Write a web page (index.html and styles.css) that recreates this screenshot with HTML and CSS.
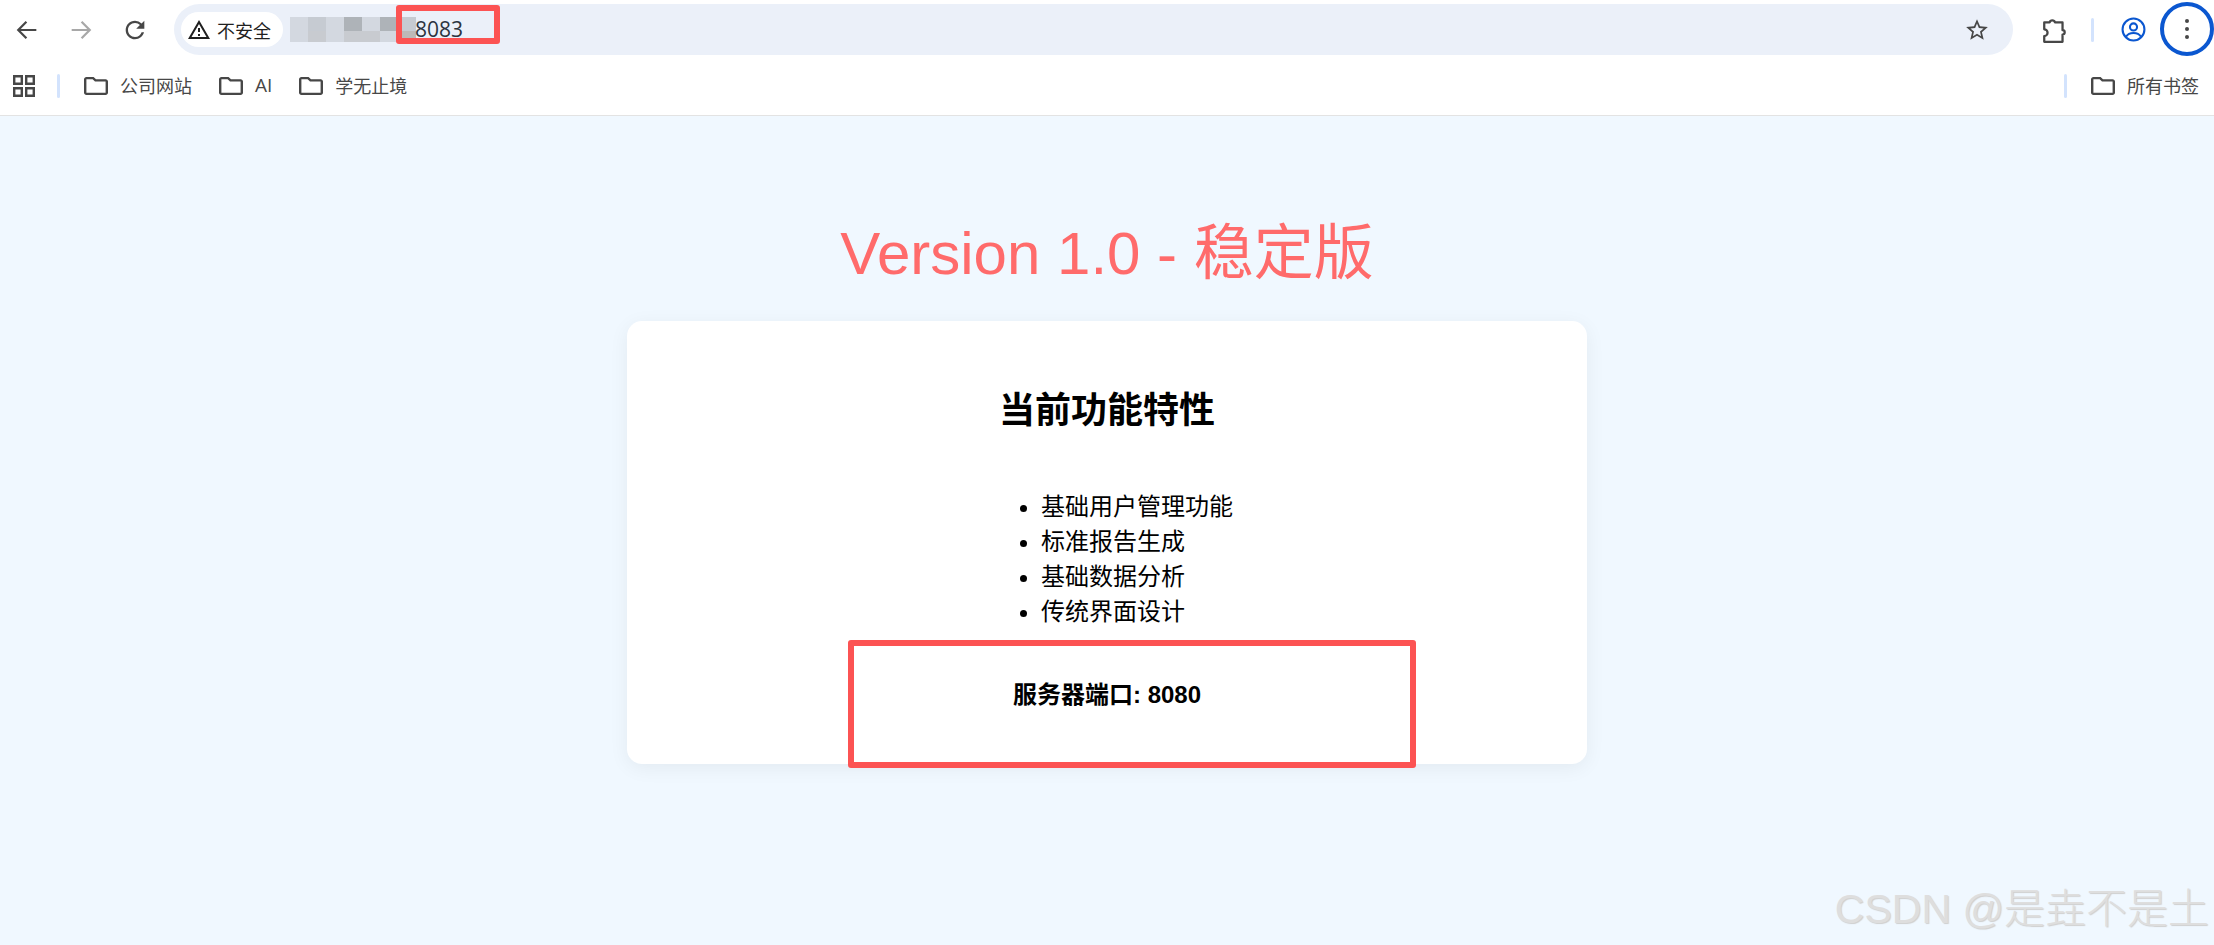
FILE: index.html
```html
<!DOCTYPE html>
<html lang="zh-CN">
<head>
<meta charset="utf-8">
<title>Version 1.0 - 稳定版</title>
<link rel="stylesheet" href="styles.css">
</head>
<body>
<header class="chrome">
  <div class="toolbar">
    <button class="nav"><svg class="ico-nav" viewBox="0 0 24 24"><path class="line dark" d="M20 12H4.5M11.5 5 4.5 12l7 7"/></svg></button>
    <button class="nav"><svg class="ico-nav" viewBox="0 0 24 24"><path class="line faint" d="M4 12h15.5M12.5 5l7 7-7 7"/></svg></button>
    <button class="nav"><svg class="ico-nav" viewBox="0 0 24 24"><path class="fill-dark" d="M17.65 6.35A7.958 7.958 0 0 0 12 4c-4.42 0-7.99 3.58-7.99 8s3.57 8 7.99 8c3.73 0 6.84-2.55 7.73-6h-2.08A5.99 5.99 0 0 1 12 18c-3.31 0-6-2.69-6-6s2.69-6 6-6c1.66 0 3.14.69 4.22 1.78L13 11h7V4l-2.35 2.35z"/></svg></button>
    <div class="omnibox">
      <div class="chip">
        <svg class="ico-warn" viewBox="0 0 24 24"><path d="M12 5.99 19.53 19H4.47L12 5.99M12 2 1 21h22L12 2zm1 14h-2v2h2v-2zm0-6h-2v4h2v-4z"/></svg>
        <span>不安全</span>
      </div>
      <div class="mosaic">
        <i class="m1"></i><i class="m2"></i><i class="m1"></i><i class="m3"></i><i class="m1"></i><i class="m3"></i><i class="m2"></i>
        <i class="m1"></i><i class="m4"></i><i class="m1"></i><i class="m4"></i><i class="m4"></i><i class="m1"></i><i class="m5"></i>
      </div>
      <span class="port">8083</span>
      <svg class="ico-star" viewBox="0 0 24 24"><path d="M22 9.24l-7.19-.62L12 2 9.19 8.63 2 9.24l5.46 4.73L5.82 21 12 17.27 18.18 21l-1.63-7.03L22 9.24zM12 15.4l-3.76 2.27 1-4.28-3.32-2.88 4.38-.38L12 6.1l1.71 4.04 4.38.38-3.32 2.88 1 4.28L12 15.4z"/></svg>
      <div class="mark mark-url"></div>
    </div>
    <svg class="ico-ext" viewBox="0 0 26 26"><path class="ext-line" d="M3 6h5a2.6 2.6 0 0 1 5 0h7v7.200a2 2 0 0 1 0 4V24H3v-5.400a3 3 0 0 0 0-6.200z"/></svg>
    <div class="divider div-top"></div>
    <svg class="ico-profile" viewBox="0 0 24 24"><circle class="ring" cx="12" cy="12" r="10.5"/><circle class="ring" cx="12" cy="9.5" r="3.4"/><path class="ring" d="M4.8 19c1.6-2.6 4.2-3.6 7.2-3.6s5.6 1 7.2 3.6"/></svg>
    <div class="menu"><b></b><b></b><b></b></div>
  </div>
  <nav class="bookmarks">
    <svg class="ico-apps" viewBox="0 0 22 22"><path d="M1.2 1.2h7.6v7.6H1.200zM13.200 1.200h7.600v7.600h-7.600zM1.200 13.200h7.600v7.600H1.200zM13.200 13.200h7.600v7.600h-7.600z"/></svg>
    <div class="divider div-apps"></div>
    <a class="bm"><svg class="ico-folder" viewBox="2 4 20 16" preserveAspectRatio="none"><path d="M4 20q-.825 0-1.412-.587Q2 18.825 2 18V6q0-.825.588-1.412Q3.175 4 4 4h6l2 2h8q.825 0 1.413.588Q22 7.175 22 8v10q0 .825-.587 1.413Q20.825 20 20 20Zm0-2h16V8h-8.825l-2-2H4v12Z"/></svg><span>公司网站</span></a>
    <a class="bm"><svg class="ico-folder" viewBox="2 4 20 16" preserveAspectRatio="none"><path d="M4 20q-.825 0-1.412-.587Q2 18.825 2 18V6q0-.825.588-1.412Q3.175 4 4 4h6l2 2h8q.825 0 1.413.588Q22 7.175 22 8v10q0 .825-.587 1.413Q20.825 20 20 20Zm0-2h16V8h-8.825l-2-2H4v12Z"/></svg><span class="ai">AI</span></a>
    <a class="bm"><svg class="ico-folder" viewBox="2 4 20 16" preserveAspectRatio="none"><path d="M4 20q-.825 0-1.412-.587Q2 18.825 2 18V6q0-.825.588-1.412Q3.175 4 4 4h6l2 2h8q.825 0 1.413.588Q22 7.175 22 8v10q0 .825-.587 1.413Q20.825 20 20 20Zm0-2h16V8h-8.825l-2-2H4v12Z"/></svg><span>学无止境</span></a>
    <div class="spacer"></div>
    <div class="divider div-all"></div>
    <a class="bm bm-all"><svg class="ico-folder" viewBox="2 4 20 16" preserveAspectRatio="none"><path d="M4 20q-.825 0-1.412-.587Q2 18.825 2 18V6q0-.825.588-1.412Q3.175 4 4 4h6l2 2h8q.825 0 1.413.588Q22 7.175 22 8v10q0 .825-.587 1.413Q20.825 20 20 20Zm0-2h16V8h-8.825l-2-2H4v12Z"/></svg><span>所有书签</span></a>
  </nav>
</header>
<main class="page">
  <h1 class="title">Version 1.0 - 稳定版</h1>
  <section class="card">
    <h2 class="card-title">当前功能特性</h2>
    <ul class="features">
      <li>基础用户管理功能</li>
      <li>标准报告生成</li>
      <li>基础数据分析</li>
      <li>传统界面设计</li>
    </ul>
    <p class="server">服务器端口: 8080</p>
    <div class="mark mark-port"></div>
  </section>
  <div class="watermark">CSDN @是垚不是土</div>
</main>
</body>
</html>
```
FILE: styles.css
```css
* { box-sizing: border-box; }
html, body { margin: 0; height: 100%; overflow: hidden; }
body {
  display: flex;
  flex-direction: column;
  background: #f0f8ff;
  font-family: "Liberation Sans", "Noto Sans CJK SC", sans-serif;
  color: #000;
}
svg { display: block; flex: none; }

/* browser chrome */
.chrome { background: #fff; border-bottom: 1px solid #e3e3e3; height: 116px; flex: none; }
.toolbar { display: flex; align-items: center; height: 55px; padding-top: 4px; }
.nav {
  width: 54px; height: 51px; border: 0; padding: 0; background: none;
  display: flex; align-items: center; justify-content: center;
}
.ico-nav { width: 28px; height: 28px; }
.line { fill: none; stroke-width: 1.9; }
.dark { stroke: #474747; }
.faint { stroke: #a8a8a8; }
.fill-dark { fill: #474747; }

.omnibox {
  position: relative;
  flex: 1;
  height: 51px;
  margin-left: 12px;
  border-radius: 26px;
  background: #ebf0f9;
  display: flex;
  align-items: center;
  padding-left: 7px;
}
.chip {
  display: flex; align-items: center; gap: 6px;
  width: 102px; height: 35px; padding-left: 7px;
  border-radius: 18px; background: #fff;
  font: 18px/1 "Noto Sans CJK SC", sans-serif; color: #1f1f1f;
}
.ico-warn { width: 24px; height: 24px; margin-left: -1px; fill: #1f1f1f; }
.mosaic {
  display: grid;
  grid-template-columns: repeat(7, 18px);
  grid-template-rows: 14px 11px;
  margin-left: 7px;
  width: 125px;
}
.m1 { background: #d3d8e0; }
.m2 { background: #c6cbd2; }
.m3 { background: #aeb3b8; }
.m4 { background: #c8cbd0; }
.m5 { background: #bdb9b8; }
.port {
  font: 21px/1 "Open Sans", sans-serif; color: #2c3440;
}
.ico-star { width: 26px; height: 26px; margin-left: auto; margin-right: 23px; fill: #474747; }

.mark { position: absolute; border: 6px solid #fc5353; border-radius: 3px; }
.mark-url { left: 222px; top: 1px; width: 104px; height: 39px; }

.ico-ext { width: 28px; height: 28px; margin-left: 28px; }
.ext-line { fill: none; stroke: #474747; stroke-width: 2.1; stroke-linejoin: round; }
.divider { width: 3px; height: 24px; border-radius: 2px; background: #d3e3fd; flex: none; }
.div-top { margin-left: 22px; }
.ico-profile { width: 25px; height: 25px; margin-left: 27px; }
.ring { fill: none; stroke: #0b57d0; stroke-width: 2; }
.menu {
  width: 54px; height: 54px; margin-left: 14px; margin-top: -2px;
  border: 4px solid #0b57d0; border-radius: 50%;
  display: flex; flex-direction: column; align-items: center; justify-content: center; gap: 4px;
}
.menu b { width: 4px; height: 4px; border-radius: 50%; background: #474747; }

.bookmarks { display: flex; align-items: center; height: 60px; padding-top: 1px; }
.ico-apps { width: 22px; height: 22px; margin-left: 13px; fill: none; stroke: #474747; stroke-width: 2.4; }
.div-apps { margin-left: 22px; }
.bm {
  display: flex; align-items: center; gap: 12px;
  font: 18px/1 "Noto Sans CJK SC", sans-serif; color: #474747;
}
.bm span { font-family: "Open Sans", "Noto Sans CJK SC", sans-serif; }
.bm .ai { font-size: 19px; }
.ico-folder { width: 24px; height: 18px; fill: #474747; }
.div-apps + .bm { margin-left: 24px; }
.bm + .bm { margin-left: 27px; }
.spacer { flex: 1; }
.bm-all { margin-left: 24px; margin-right: 15px; }

/* page */
.page { position: relative; flex: 1; }
.title {
  margin: 0; padding-top: 101px;
  text-align: center;
  font-size: 60px; line-height: 74px; font-weight: 400;
  color: #ff6b6b;
}
.card {
  position: relative;
  width: 960px; height: 443px;
  margin: 30px auto 0;
  padding-top: 65px;
  border-radius: 15px;
  background: #fff;
  box-shadow: 0 4px 20px rgba(0, 0, 0, .06);
}
.card-title {
  margin: 0; text-align: center;
  font-size: 36px; line-height: 50px; font-weight: 700;
}
.features {
  margin: 53px 0 0 374px; padding: 0 0 0 40px;
  font-size: 24px; line-height: 35px;
}
.server {
  margin: 48px 0 0; text-align: center;
  font-size: 24px; line-height: 36px; font-weight: 700;
}
.mark-port { left: 221px; top: 319px; width: 568px; height: 128px; }
.watermark {
  position: absolute; right: 5px; bottom: 12px;
  font-size: 41px; line-height: 48px;
  font-weight: 300;
  color: #dedede;
  text-shadow: 1px 1px 1px #cfcfcf;
}
```
